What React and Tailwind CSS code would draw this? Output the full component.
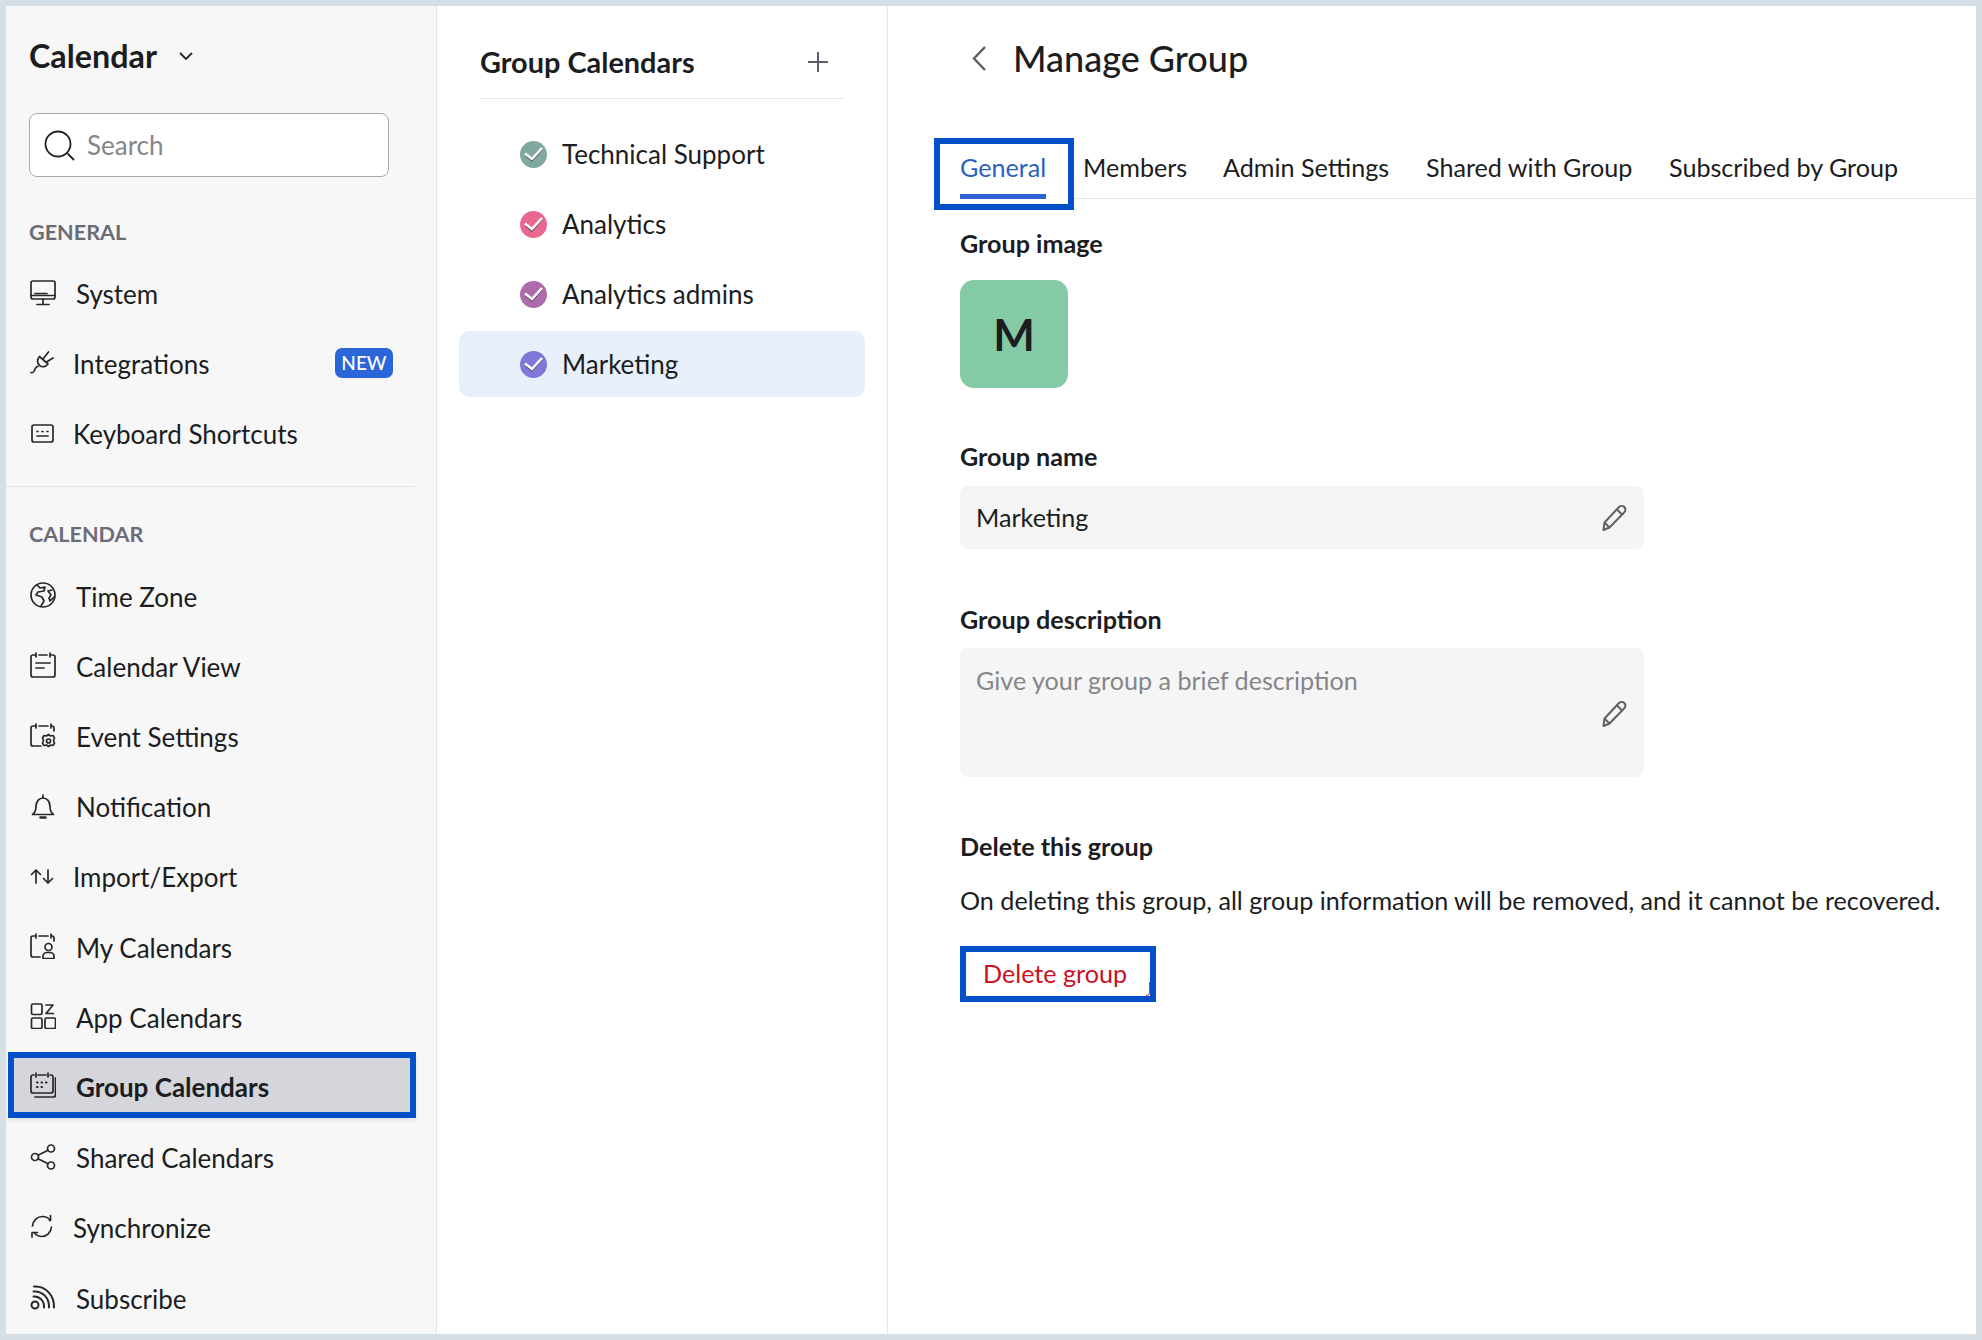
import React from 'react';

const Ico = ({ children, w = 26, h = 26, sw = 1.7, className = '' }) => (
  <svg width={w} height={h} viewBox={`0 0 ${w} ${h}`} fill="none" stroke="#26282c" strokeWidth={sw} strokeLinecap="round" strokeLinejoin="round" className={className}>
    {children}
  </svg>
);

const icons = {
  system: (
    <Ico>
      <rect x="1" y="1" width="24" height="18" rx="2" />
      <path d="M5 13.500h12M1 15.500h24M13 19v5M7 24.500h12" />
    </Ico>
  ),
  plug: (
    <Ico>
      <path d="M1 22.500c3 .5 3-1 4-3.500.7-1.600 1.500-2.600 3-2.600" />
      <path d="M9.500 6.500l8.500 7.500c-2.500 3.200-6 3.600-8.500 1.300C7.300 13 7 9.500 9.500 6.500z" />
      <path d="M13 9l5.500-7M16.500 12l6.500-4" />
    </Ico>
  ),
  keyboard: (
    <Ico>
      <rect x="2" y="5" width="21" height="17" rx="2" />
      <path d="M7 16h11M7 11.500h1M12 11.500h1M17 11.500h1" />
    </Ico>
  ),
  globe: (
    <Ico>
      <circle cx="13" cy="13" r="12" />
      <path d="M7 3l3 3 5-1-1 4-6 1-2 3 6 2 2 4-3 5M22 8l-4 1 3 4-2 3 1 3 4-4" />
    </Ico>
  ),
  calView: (
    <Ico>
      <path d="M9 3h8M21 3h2a2 2 0 0 1 2 2v18a2 2 0 0 1-2 2H3a2 2 0 0 1-2-2V5a2 2 0 0 1 2-2h2M6 1v4M20 1v4M6 11h14M6 16h8" />
    </Ico>
  ),
  eventSet: (
    <Ico>
      <path d="M11 23H3a2 2 0 0 1-2-2V5a2 2 0 0 1 2-2h2M9 3h9M22 3a2 2 0 0 1 2 2v3M6 1v4M21 1v4" />
      <circle cx="18.500" cy="18" r="2" />
      <path d="M18.500 11.500l2 1.500 2.500-.5 1.500 2.500-1 2.500 1 2.500-1.500 2.500-2.500-.5-2 1.500-2-1.500-2.500.5-1.500-2.500 1-2.500-1-2.500 1.500-2.500 2.500.5z" />
    </Ico>
  ),
  bell: (
    <Ico>
      <path d="M2.500 21.500c2-1.500 3.500-3.500 3.500-8 0-5 3-8.500 7-8.500s7 3.500 7 8.500c0 4.500 1.500 6.500 3.500 8z" />
      <path d="M13 2v3" />
      <path d="M10.500 24.500h5" strokeWidth="2.500" />
    </Ico>
  ),
  arrows: (
    <Ico>
      <path d="M6 20V7M1.500 11.500L6 7l4.500 4.500M18 7v13M13.500 15.500L18 20l4.500-4.500" />
    </Ico>
  ),
  myCal: (
    <Ico>
      <path d="M10 24H3a2 2 0 0 1-2-2V5a2 2 0 0 1 2-2h2M9 3h9M22 3a2 2 0 0 1 2 2v3M6 1v4M21 1v4" />
      <circle cx="18.500" cy="14" r="3.500" />
      <path d="M13 25.500v-2a4 4 0 0 1 4-4h3a4 4 0 0 1 4 4v2z" />
    </Ico>
  ),
  appCal: (
    <Ico>
      <rect x="1.500" y="1" width="10.500" height="10.500" rx="1.500" />
      <rect x="1.500" y="15" width="10.500" height="10.500" rx="1.500" />
      <rect x="15" y="15" width="10.500" height="10.500" rx="1.500" />
      <path d="M16 2h7l-7 8.500h7.500" />
    </Ico>
  ),
  groupCal: (
    <Ico>
      <path d="M20 3h1a2 2 0 0 1 2 2v14a2 2 0 0 1-2 2H3a2 2 0 0 1-2-2V5a2 2 0 0 1 2-2h1M8 3h8M6 1v4M18 1v4" />
      <path d="M25.500 6v17a2 2 0 0 1-2 2H5" />
      <path d="M7 10.500h.5M11.500 10.500h.5M16 10.500h.5M7 15h.5M11.500 15h.5" strokeWidth="2.200" />
    </Ico>
  ),
  share: (
    <Ico>
      <circle cx="5" cy="13" r="3.500" />
      <circle cx="21" cy="4.500" r="3.500" />
      <circle cx="21" cy="21.500" r="3.500" />
      <path d="M8 11.200l10-5M8 14.800l10 5" />
    </Ico>
  ),
  sync: (
    <Ico>
      <path d="M2.500 12C3 6.500 7.500 2.500 12.500 2.500c3 0 5.500 1 7.500 3.500" />
      <path d="M20.500 1.500v5h-1" />
      <path d="M21.500 13c-.5 5.500-5 9.500-9.500 9.500-3 0-5.500-1-7.500-3.500" />
      <path d="M2 23v-4.500h5.500" />
    </Ico>
  ),
  rss: (
    <Ico sw={2}>
      <circle cx="5" cy="21" r="3.500" />
      <path d="M3.500 12.500c6 -.5 11 4.500 10.500 11M3.500 7.500c9-.8 16 6.500 15.500 16M4 2.500c11.500-1 20.500 9 20 21" />
    </Ico>
  ),
};

const generalItems = [
  { id: 'system', label: 'System', icon: 'system', gap: 'w-[46px]' },
  { id: 'integrations', label: 'Integrations', icon: 'plug', gap: 'w-[43px]', badge: true },
  { id: 'keyboard', label: 'Keyboard Shortcuts', icon: 'keyboard', gap: 'w-[43px]' },
];

const calendarItems = [
  { id: 'tz', label: 'Time Zone', icon: 'globe', gap: 'w-[46px]' },
  { id: 'view', label: 'Calendar View', icon: 'calView', gap: 'w-[46px]' },
  { id: 'event', label: 'Event Settings', icon: 'eventSet', gap: 'w-[46px]' },
  { id: 'notif', label: 'Notification', icon: 'bell', gap: 'w-[46px]' },
  { id: 'import', label: 'Import/Export', icon: 'arrows', gap: 'w-[43px]' },
  { id: 'my', label: 'My Calendars', icon: 'myCal', gap: 'w-[46px]' },
  { id: 'app', label: 'App Calendars', icon: 'appCal', gap: 'w-[46px]' },
  { id: 'group', label: 'Group Calendars', icon: 'groupCal', gap: 'w-[46px]', active: true },
  { id: 'shared', label: 'Shared Calendars', icon: 'share', gap: 'w-[46px]' },
  { id: 'sync', label: 'Synchronize', icon: 'sync', gap: 'w-[43px]' },
  { id: 'rss', label: 'Subscribe', icon: 'rss', gap: 'w-[46px]' },
];

const groups = [
  { name: 'Technical Support', color: 'bg-[#7fa89f]' },
  { name: 'Analytics', color: 'bg-[#e8688f]' },
  { name: 'Analytics admins', color: 'bg-[#ad6bab]' },
  { name: 'Marketing', color: 'bg-[#7f78d8]', selected: true },
];

const tabs = [
  { name: 'Members', cls: 'w-[140px]' },
  { name: 'Admin Settings', cls: 'w-[203px]' },
  { name: 'Shared with Group', cls: 'w-[243px]' },
  { name: 'Subscribed by Group', cls: '' },
];

const SideItem = ({ item }) => {
  if (item.active) {
    return (
      <div className="flex items-center h-[66px] mt-[1.100px] mb-[3.100px] ml-[2px] w-[408px] border-[6px] border-[#0450c9] bg-[#d5d6db] pl-[16px] shadow-[0_3px_4px_rgba(0,0,0,0.08)]">
        <span className={`${item.gap} shrink-0 flex`}>{icons[item.icon]}</span>
        <span className="font-bold pt-[4px]">{item.label}</span>
      </div>
    );
  }
  return (
    <div className="flex items-center h-[70.200px] pl-[24px] pr-[43px]">
      <span className={`${item.gap} shrink-0 flex`}>{icons[item.icon]}</span>
      <span className="pt-[4px]">{item.label}</span>
      {item.badge && (
        <span className="ml-auto w-[58px] h-[30px] flex items-center justify-center rounded-[7px] bg-[#2a65d9] text-white text-[19px] font-medium">NEW</span>
      )}
    </div>
  );
};

const Pencil = () => (
  <svg width="28" height="28" viewBox="0 0 28 28" fill="none" stroke="#5f6065" strokeWidth="2" strokeLinejoin="round">
    <path d="M2.500 26l1-7.500L18 3c1.500-1.500 3.800-1.500 5.300 0s1.500 3.800 0 5.300L8.500 23.500z" />
    <path d="M3.500 18.500l5 5M16 5.500l5.500 5.500" />
  </svg>
);

const App = () => {
  return (
    <div className="w-[1982px] h-[1340px] bg-[#d6dfe6] p-[6px] flex text-[#1b1d21] text-[25.150px] font-['Lato','Liberation_Sans',sans-serif] overflow-hidden">
      <aside className="w-[431px] shrink-0 bg-[#f7f7f8] border-r border-[#e3e5e9] flex flex-col text-[26px]">
        <div className="flex items-center h-[100px] pl-[23px]">
          <h1 className="font-bold text-[32.300px]">Calendar</h1>
          <svg width="16" height="10" viewBox="0 0 16 10" fill="none" stroke="#26282c" strokeWidth="1.800" className="ml-[21px]">
            <path d="M2 2l6 6 6-6" />
          </svg>
        </div>
        <div className="mx-[23px] w-[360px] h-[64px] mt-[7px] flex items-center bg-white border border-[#a8a8ab] rounded-[8px] pl-[14px]">
          <svg width="31" height="31" viewBox="0 0 31 31" fill="none" stroke="#1f2125" strokeWidth="1.800" strokeLinecap="round">
            <circle cx="14" cy="14" r="12.500" />
            <path d="M24 24l5.500 5.500" />
          </svg>
          <span className="ml-[12px] text-[#85868a]">Search</span>
        </div>
        <div className="mt-[41px] h-[28px] pl-[23px] flex items-center text-[21.600px] font-bold text-[#6a6d75]">GENERAL</div>
        <div className="mt-[11.500px]">
          {generalItems.map(item => <SideItem key={item.id} item={item} />)}
        </div>
        <div className="mt-[17.500px] border-t border-[#e3e4e8] w-[409px]"></div>
        <div className="mt-[33.500px] h-[28px] pl-[23px] flex items-center text-[21.600px] font-bold text-[#6a6d75]">CALENDAR</div>
        <div className="mt-[12px]">
          {calendarItems.map(item => <SideItem key={item.id} item={item} />)}
        </div>
      </aside>

      <section className="w-[451px] shrink-0 bg-white border-r border-[#e6e7ea] flex flex-col text-[26px]">
        <div className="mx-[43px] w-[364px] h-[93px] pt-[20px] flex items-center justify-between border-b border-[#e5e6e9]">
          <h2 className="font-bold text-[28.900px]">Group Calendars</h2>
          <svg width="20" height="20" viewBox="0 0 20 20" fill="none" stroke="#5c5c6a" strokeWidth="2" className="mr-[16px]">
            <path d="M10 0v20M0 10h20" />
          </svg>
        </div>
        <div className="mt-[22px] mx-[22px] w-[406px]">
          {groups.map(g => (
            <div key={g.name} className={`flex items-center h-[66px] mb-[4px] pl-[61px] rounded-[10px] ${g.selected ? 'bg-[#e8f0fc]' : ''}`}>
              <span className={`w-[27px] h-[27px] rounded-full ${g.color} flex items-center justify-center`}>
                <svg width="21" height="17" viewBox="0 0 21 17" fill="none">
                  <path d="M2.500 9.500l6.500 5.500 10-11.500" stroke="#3a3340" strokeWidth="1.200" />
                  <path d="M2 7.500l7 5.500 10-11" stroke="#fff" strokeWidth="2.600" />
                </svg>
              </span>
              <span className="ml-[15px]">{g.name}</span>
            </div>
          ))}
        </div>
      </section>

      <main className="flex-1 bg-white flex flex-col min-w-0">
        <div className="flex items-center h-[104px] pl-[83px]">
          <svg width="16" height="27" viewBox="0 0 16 27" fill="none" stroke="#5b5d62" strokeWidth="2.400">
            <path d="M14 2L3 13.500 14 25" />
          </svg>
          <h1 className="ml-[26px] text-[36px] font-medium">Manage Group</h1>
        </div>
        <div className="ml-[46px] h-[89px] border-b border-[#e6e7ea] flex items-end">
          <div className="w-[140px] h-[72px] mb-[-12px] z-10 border-[6px] border-[#0450c9] pl-[20px] bg-white">
            <div className="w-[86px] h-[55px] pb-[2px] border-b-[5px] border-[#2e63d3] text-[#2c5fc4] flex items-center">General</div>
          </div>
          <div className="flex h-[60px] items-center ml-[9px]">
            {tabs.map(t => (
              <span key={t.name} className={t.cls}>{t.name}</span>
            ))}
          </div>
        </div>
        <div className="pl-[72px] pr-[30px]">
          <div className="font-bold mt-[29px] h-[32px] flex items-center">Group image</div>
          <div className="mt-[20px] w-[108px] h-[108px] rounded-[14px] bg-[#84cba5] flex items-center justify-center text-[44px] font-bold">M</div>
          <div className="font-bold mt-[53px] h-[32px] flex items-center">Group name</div>
          <div className="mt-[13px] w-[684px] h-[63px] bg-[#f5f5f5] rounded-[8px] flex items-center justify-between pl-[16px] pr-[15px]">
            <span>Marketing</span>
            <Pencil />
          </div>
          <div className="font-bold mt-[55px] h-[32px] flex items-center">Group description</div>
          <div className="mt-[12px] w-[684px] h-[129px] bg-[#f5f5f5] rounded-[8px] flex justify-between pl-[16px] pr-[15px] pt-[14px] text-[#85868a]">
            <span>Give your group a brief description</span>
            <span className="mt-[38px]"><Pencil /></span>
          </div>
          <div className="font-bold mt-[54px] h-[32px] flex items-center">Delete this group</div>
          <div className="mt-[22px] h-[32px] flex items-center whitespace-nowrap">On deleting this group, all group information will be removed, and it cannot be recovered.</div>
          <div className="relative mt-[29px] w-[196px] h-[56px] border-[6px] border-[#0450c9] bg-white flex items-center pl-[17px] text-[#cc1122]">
            Delete group
            <span className="absolute right-0 bottom-0 h-[14px] w-[4px] border-r border-b border-[#d9414f] rounded-br-[6px]"></span>
          </div>
        </div>
      </main>
    </div>
  );
};

export default App;
